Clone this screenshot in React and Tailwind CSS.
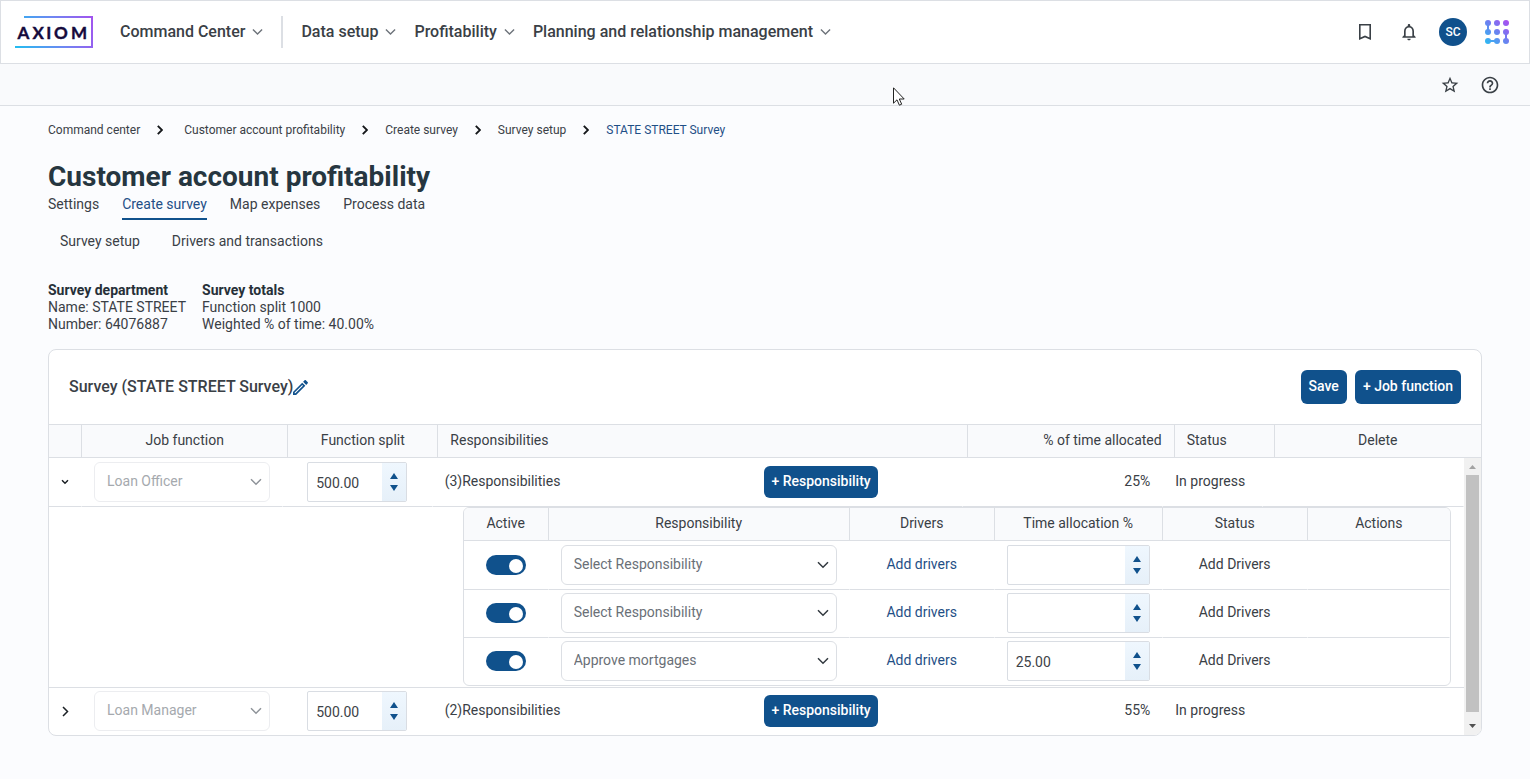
import React from "react";
import { MdNotificationsNone, MdStarBorder, MdHelpOutline } from "react-icons/md";

const menus = ["Data setup", "Profitability", "Planning and relationship management"];
const crumbs = ["Command center", "Customer account profitability", "Create survey", "Survey setup", "STATE STREET Survey"];
const tabs = ["Settings", "Create survey", "Map expenses", "Process data"];
const subTabs = ["Survey setup", "Drivers and transactions"];
const responsibilities = [
  { id: 1, name: "Select Responsibility", time: "" },
  { id: 2, name: "Select Responsibility", time: "" },
  { id: 3, name: "Approve mortgages", time: "25.00" },
];

function Caret({ className }) {
  return (
    <svg viewBox="0 0 12 8" className={className} fill="none" stroke="currentColor" strokeWidth="1.5" aria-hidden="true">
      <path d="M1 1.2l5 5 5-5" />
    </svg>
  );
}

function Logo() {
  return (
    <svg width="78" height="32" viewBox="0 0 78 32" role="img" aria-label="Axiom">
      <defs>
        <linearGradient id="frame" gradientUnits="userSpaceOnUse" x1="0" y1="31" x2="78" y2="0">
          <stop offset="0" stopColor="#22bdf0" />
          <stop offset="0.55" stopColor="#6f86f2" />
          <stop offset="1" stopColor="#a352ee" />
        </linearGradient>
      </defs>
      <path d="M9 1h68v30H0" fill="none" stroke="url(#frame)" strokeWidth="2" />
      <text x="2.5 17.5 31.2 39 56" y="23" fill="#150a3c" stroke="#150a3c" strokeWidth="0.4" fontFamily="Lato, sans-serif" fontWeight="700" fontSize="17">AXIOM</text>
    </svg>
  );
}

function Waffle() {
  return (
    <svg width="24" height="24" viewBox="0 0 24 24" aria-hidden="true">
      <defs>
        <linearGradient id="dots" gradientUnits="userSpaceOnUse" x1="1" y1="23" x2="23" y2="1">
          <stop offset="0" stopColor="#2fb8f2" />
          <stop offset="0.5" stopColor="#6b82f0" />
          <stop offset="1" stopColor="#a94ff0" />
        </linearGradient>
      </defs>
      <g fill="url(#dots)">
        {[3, 12, 21].map((y) => [3, 12, 21].map((x) => <circle key={`${x}-${y}`} cx={x} cy={y} r="3" />))}
        <path d="M2 3h2v9H2zM20 12h2v9h-2zM3 20h9v2H3z" />
      </g>
    </svg>
  );
}

function Dropdown({ label, value, disabled }) {
  return (
    <div className={disabled ? "relative text-[#a5a9ae]" : "relative text-[#6a7077]"}>
      <select
        aria-label={label}
        disabled={disabled}
        defaultValue={value}
        className={`block h-10 w-full appearance-none rounded-md border bg-white pr-7 pb-0.5 pl-3 text-sm opacity-100 ${disabled ? "border-[#ecedf0]" : "border-[#dcdfe4]"}`}
      >
        <option>{value}</option>
      </select>
      <Caret className={`pointer-events-none absolute top-4 right-2 h-2 w-3 ${disabled ? "text-[#8f949a]" : "text-[#32393f]"}`} />
    </div>
  );
}

function NumberBox({ label, value }) {
  return (
    <div className="flex h-10 w-full overflow-hidden rounded-xs border border-[#d9dde3] bg-white">
      <input aria-label={label} type="text" inputMode="decimal" defaultValue={value} className="min-w-0 flex-1 pt-0.5 pl-2 text-sm text-[#3d4247] outline-none" />
      <div className="flex w-6 shrink-0 flex-col items-center justify-center gap-1.5 bg-linear-to-b from-[#eff7fe] to-[#e6f0f9] text-[#10518c]">
        <button type="button" aria-label={`Increase ${label}`}>
          <svg width="8" height="6" viewBox="0 0 8 6" fill="currentColor" className="block"><path d="M4 0l4 6H0z" /></svg>
        </button>
        <button type="button" aria-label={`Decrease ${label}`}>
          <svg width="8" height="6" viewBox="0 0 8 6" fill="currentColor" className="block"><path d="M4 6L0 0h8z" /></svg>
        </button>
      </div>
    </div>
  );
}

function Toggle({ label }) {
  return (
    <label className="mx-auto block h-5 w-10">
      <input type="checkbox" role="switch" aria-label={label} defaultChecked className="peer sr-only" />
      <span className="flex h-5 w-10 items-center rounded-full bg-[#8a9097] pt-px pr-[3px] pl-[3px] peer-checked:justify-end peer-checked:bg-[#10518c]">
        <span className="size-3.5 rounded-full bg-white" />
      </span>
    </label>
  );
}

function Columns() {
  return (
    <colgroup>
      <col className="w-[33px]" />
      <col />
      <col className="w-[150px]" />
      <col className="w-[530px]" />
      <col />
      <col className="w-[100px]" />
      <col />
    </colgroup>
  );
}

const headCell = "h-[34px] border-y border-r border-[#dcdfe4] bg-[#f9fafc] px-3 pb-0.5 font-normal last:border-r-0";
const cell = "border-r border-b border-r-transparent border-b-[#dcdfe4] px-3 pt-[3px] pb-1 group-first:pt-1";

function JobRow({ name, open, count, percent, last }) {
  const edge = last ? "border-b-0" : "";
  return (
    <tr className="group">
      <td className={`border-r border-r-transparent border-b-[#dcdfe4] text-center ${last ? "" : "border-b"}`}>
        <button type="button" aria-label={open ? `Collapse ${name}` : `Expand ${name}`} className="mx-auto flex size-5 items-center justify-center text-[#1c2126]">
          {open ? (
            <svg width="8" height="6" viewBox="0 0 8 6" fill="none" stroke="currentColor" strokeWidth="1.5"><path d="M1 1.2l3 3 3-3" /></svg>
          ) : (
            <svg width="7" height="11" viewBox="0 0 7 11" fill="none" stroke="currentColor" strokeWidth="1.5"><path d="M1 1l4.5 4.5L1 10" /></svg>
          )}
        </button>
      </td>
      <td className={`${cell} ${edge}`}><Dropdown label="Job function" value={name} disabled /></td>
      <td className={`${cell} ${edge}`}><div className="mx-auto w-[100px]"><NumberBox label={`Function split for ${name}`} value="500.00" /></div></td>
      <td className={`${cell} ${edge}`}>
        <div className="flex items-center justify-between pr-[72px]">
          <span className="pb-0.5">({count})Responsibilities</span>
          <button type="button" className="h-8 rounded-md bg-[#10518c] px-[7px] pb-0.5 text-sm font-medium whitespace-nowrap text-white">+ Responsibility</button>
        </div>
      </td>
      <td className={`${cell} ${edge} text-right`}><div className="pb-0.5">{percent}</div></td>
      <td className={`${cell} ${edge} whitespace-nowrap`}><div className="pb-0.5">In progress</div></td>
      <td className={`${cell} ${edge}`}></td>
    </tr>
  );
}

function ResponsibilityTable() {
  return (
    <div className="overflow-hidden rounded-md border border-[#dcdfe4]">
      <table className="w-full table-fixed border-separate border-spacing-0 text-center">
        <colgroup>
          <col className="w-[85px]" />
          <col className="w-[301px]" />
          <col className="w-[145px]" />
          <col className="w-[168px]" />
          <col className="w-[145px]" />
          <col />
        </colgroup>
        <thead>
          <tr>
            {["Active", "Responsibility", "Drivers", "Time allocation %", "Status", "Actions"].map((h) => (
              <th key={h} scope="col" className="h-[33px] border-r border-b border-[#dcdfe4] bg-[#f9fafc] pb-0.5 font-normal last:border-r-0">{h}</th>
            ))}
          </tr>
        </thead>
        <tbody>
          {responsibilities.map((r, i) => {
            const c = `${cell} ${i === responsibilities.length - 1 ? "border-b-0" : ""}`;
            return (
              <tr key={r.id} className="group">
                <td className={c}><Toggle label={`Responsibility ${r.id} active`} /></td>
                <td className={`${c} text-left`}><Dropdown label={`Responsibility ${r.id}`} value={r.name} /></td>
                <td className={c}><a href="#drivers" className="block pb-0.5 text-[#1f4f86]">Add drivers</a></td>
                <td className={`${c} text-left`}><NumberBox label={`time allocation ${r.id}`} value={r.time} /></td>
                <td className={c}><div className="pb-0.5">Add Drivers</div></td>
                <td className={c}></td>
              </tr>
            );
          })}
        </tbody>
      </table>
    </div>
  );
}

export default function App() {
  return (
    <div className="relative min-h-screen bg-[#fbfcfe] pb-10 font-[Roboto,sans-serif] text-sm text-[#3a4046]">
      <header className="flex h-16 items-center border border-[#dcdfe4] bg-white pr-5 pl-3.5 text-base font-medium">
        <a href="#home"><Logo /></a>
        <nav className="flex items-center gap-[18px] pl-[27px]">
          <button type="button" className="flex items-center gap-[7px] whitespace-nowrap">
            Command Center<Caret className="h-2 w-[11px] text-[#6d737a]" />
          </button>
          <span className="h-8 w-0.5 bg-[#dcdfe4]" />
          {menus.map((m) => (
            <button key={m} type="button" className="flex items-center gap-[7px] whitespace-nowrap">
              {m}<Caret className="h-2 w-[11px] text-[#6d737a]" />
            </button>
          ))}
        </nav>
        <div className="ml-auto flex items-center gap-[18px]">
          <button type="button" aria-label="Bookmarks" className="flex w-7 justify-center">
            <svg width="12" height="16" viewBox="0 0 12 16" fill="none" stroke="currentColor" strokeWidth="1.6"><path d="M.8.8h10.4v13.9L6 12.4.8 14.7z" /></svg>
          </button>
          <button type="button" aria-label="Notifications" className="flex w-6 justify-center"><MdNotificationsNone size={20} /></button>
          <button type="button" aria-label="Account SC" className="flex size-7 items-center justify-center rounded-full bg-[#10518c] text-xs text-white">SC</button>
          <button type="button" aria-label="Applications"><Waffle /></button>
        </div>
      </header>

      <div className="flex h-[42px] items-center justify-end gap-5 border-b border-[#dcdfe4] bg-[#f9fafc] pr-[30px]">
        <button type="button" aria-label="Favorite"><MdStarBorder size={20} /></button>
        <button type="button" aria-label="Help"><MdHelpOutline size={20} /></button>
      </div>

      <svg className="pointer-events-none absolute top-[87px] left-[893px]" width="12" height="19" viewBox="0 0 12 19" aria-hidden="true">
        <path d="M.5.8v15.4l3.5-3.4 2.4 5.4 2.3-1-2.4-5.2h4.9z" fill="#fff" stroke="#222" strokeWidth="1" />
      </svg>

      <main className="px-12 pt-4">
        <nav aria-label="Breadcrumb">
          <ol className="flex items-center gap-[17px] text-xs/4">
            {crumbs.map((c, i) => (
              <React.Fragment key={c}>
                {i > 0 && (
                  <li aria-hidden="true">
                    <svg width="6" height="10" viewBox="0 0 6 10" fill="none" stroke="#14171a" strokeWidth="1.9"><path d="M.8.8L5 5 .8 9.2" /></svg>
                  </li>
                )}
                <li className={i === 1 ? "pl-1" : ""}>
                  <a href="#crumb" className={i === crumbs.length - 1 ? "text-[#1f4f86]" : ""}>{c}</a>
                </li>
              </React.Fragment>
            ))}
          </ol>
        </nav>

        <h1 className="mt-[23px] text-[28px]/8 font-bold text-[#263640]">Customer account profitability</h1>

        <nav className="mt-px flex gap-[23px] text-sm/5">
          {tabs.map((t) => (
            <a key={t} href="#tab" className={`border-b-2 pb-1 ${t === "Create survey" ? "border-[#10518c] text-[#1f4f86]" : "border-transparent"}`}>{t}</a>
          ))}
        </nav>
        <nav className="mt-[11px] flex gap-2 text-sm/5">
          {subTabs.map((t) => <a key={t} href="#subtab" className="px-3">{t}</a>)}
        </nav>

        <section className="mt-[31px] flex gap-4 text-sm/[17px]">
          <div>
            <h2 className="font-bold text-[#263038]">Survey department</h2>
            <p>Name: STATE STREET</p>
            <p>Number: 64076887</p>
          </div>
          <div>
            <h2 className="font-bold text-[#263038]">Survey totals</h2>
            <p>Function split 1000</p>
            <p>Weighted % of time: 40.00%</p>
          </div>
        </section>

        <section className="mt-4 overflow-hidden rounded-lg border border-[#dcdfe4] bg-white">
          <div className="flex items-center justify-between p-5">
            <div className="flex items-center">
              <h2 className="text-base/6 font-medium">Survey (STATE STREET Survey)</h2>
              <button type="button" aria-label="Edit survey name" className="text-[#10518c]">
                <svg width="15" height="15" viewBox="3 3 18 18" fill="currentColor" className="block">
                  <path d="M14.06 9.02l.92.92L5.92 19H5v-.92l9.06-9.06M17.66 3c-.25 0-.51.1-.7.29l-1.83 1.83 3.75 3.75 1.83-1.83c.39-.39.39-1.02 0-1.41l-2.34-2.34c-.2-.2-.45-.29-.71-.29zm-3.6 3.19L3 17.25V21h3.75L17.81 9.94l-3.75-3.75z" />
                </svg>
              </button>
            </div>
            <div className="flex gap-2 font-medium text-white">
              <button type="button" className="h-[34px] rounded-md bg-[#10518c] px-2 pb-0.5">Save</button>
              <button type="button" className="h-[34px] rounded-md bg-[#10518c] px-2 pb-0.5">+ Job function</button>
            </div>
          </div>

          <table className="w-full table-fixed border-separate border-spacing-0">
            <Columns />
            <thead>
              <tr>
                <th className={headCell} aria-label="Expand"></th>
                <th scope="col" className={headCell}>Job function</th>
                <th scope="col" className={headCell}>Function split</th>
                <th scope="col" className={`${headCell} text-left`}>Responsibilities</th>
                <th scope="col" className={`${headCell} text-right`}>% of time allocated</th>
                <th scope="col" className={`${headCell} text-left`}>Status</th>
                <th scope="col" className={headCell}>Delete</th>
              </tr>
            </thead>
          </table>

          <div className="flex">
            <div className="min-w-0 flex-1">
              <table aria-label="Job functions" className="w-full table-fixed border-separate border-spacing-0">
                <Columns />
                <tbody>
                  <JobRow name="Loan Officer" open count={3} percent="25%" />
                  <tr>
                    <td colSpan={3} className="border-b border-[#dcdfe4]"></td>
                    <td colSpan={4} className="border-b border-[#dcdfe4] pr-[13px] pb-px pl-[30px]"><ResponsibilityTable /></td>
                  </tr>
                  <JobRow name="Loan Manager" count={2} percent="55%" last />
                </tbody>
              </table>
            </div>
            <div className="flex w-[17px] shrink-0 flex-col items-center bg-[#f1f1f1]" aria-hidden="true">
              <svg width="17" height="17" viewBox="0 0 17 17" className="shrink-0"><path d="M8.5 7L12 11H5z" fill="#a3a3a3" /></svg>
              <div className="w-[13px] flex-1 bg-[#c1c1c1]" />
              <svg width="17" height="23" viewBox="0 0 17 23" className="shrink-0"><path d="M8.5 16L5 12h7z" fill="#505050" /></svg>
            </div>
          </div>
        </section>
      </main>
    </div>
  );
}
